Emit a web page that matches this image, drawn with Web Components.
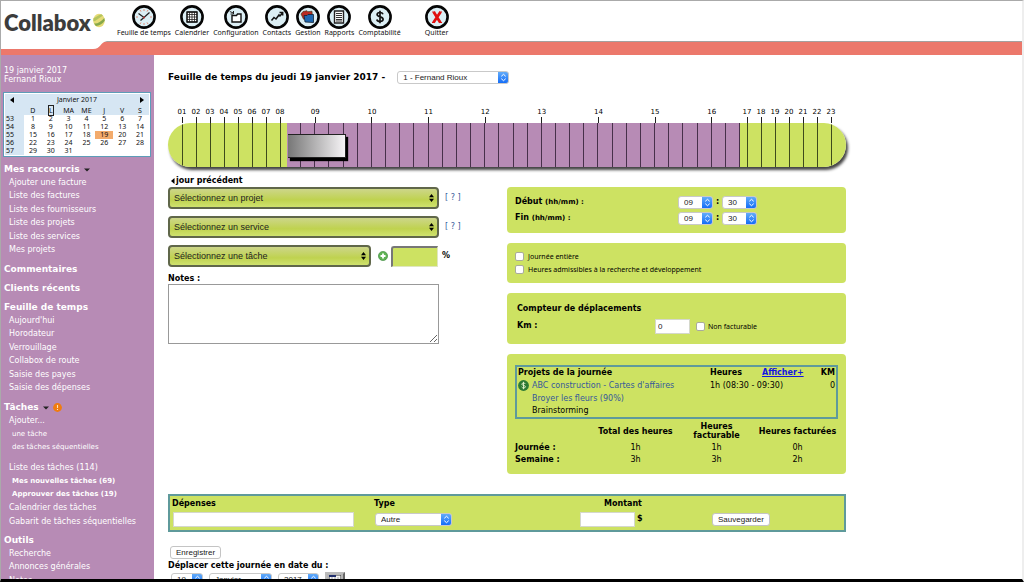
<!DOCTYPE html>
<html lang="fr">
<head>
<meta charset="utf-8">
<title>Collabox - Feuille de temps</title>
<style>
  html, body { height: 100%; margin: 0; }
  body { font: 8px/12px "DejaVu Sans", Verdana, sans-serif; color: #000; background: #fff; }
</style>
</head>
<body>
<collabox-app></collabox-app>

<script>
const LIME = '#cde262', MAUVE = '#b78bb5', TEAL = '#5f9a9b';

/* Rules shared by every shadow root that holds form controls or links. */
const shared = `
  * { box-sizing: border-box; }
  a { color: #35599a; text-decoration: none; }
  label { cursor: default; }
  input, select, textarea, button { margin: 0; color: #222; font: 8px/12px "Liberation Sans", Helvetica, sans-serif; }
  .mac {
    appearance: none; height: 13px; padding: 0 12px 0 5px; border: 1px solid #c9c9c9; border-radius: 3px;
    background: url("data:image/svg+xml,%3Csvg xmlns='http://www.w3.org/2000/svg' viewBox='0 0 11 13'%3E%3ClinearGradient id='g' x2='0' y2='1'%3E%3Cstop stop-color='%2369b1fa'/%3E%3Cstop offset='1' stop-color='%230d68f8'/%3E%3C/linearGradient%3E%3Cpath d='M0 0h8a3 3 0 0 1 3 3v7a3 3 0 0 1-3 3H0z' fill='url(%23g)'/%3E%3Cpath d='M3.3 5.3l2.2-2 2.2 2M3.3 7.7l2.2 2 2.2-2' fill='none' stroke='%23fff' stroke-width='1'/%3E%3C/svg%3E") right center / 11px 13px no-repeat border-box #fff;
  }
  .field { height: 15px; padding: 0 2px; border: 1px solid #d5d8cc; border-radius: 0; background: #fff; }
  .push { height: 13px; padding: 0 5px; border: 1px solid #c4c4c4; border-radius: 3px; background: #fff; line-height: 11px; }
  input[type=checkbox] { appearance: none; width: 9px; height: 9px; border: 1px solid #a9ab9c; border-radius: 2px; background: #fff; }
`;

function define(name, html, setup) {
  const template = document.createElement('template');
  template.innerHTML = html;
  customElements.define(name, class extends HTMLElement {
    constructor() {
      super();
      this.attachShadow({ mode: 'open' }).append(template.content.cloneNode(true));
    }
    connectedCallback() {
      if (setup && !this.ready) { this.ready = true; setup(this, this.shadowRoot); }
    }
  });
}

/* ---------- toolbar ---------- */
define('tool-link', `
  <style>
    :host { display: block; }
    a { display: flex; flex-direction: column; align-items: center; min-width: 24px; color: #111; text-decoration: none;
        font: 7px/8px "Noto Sans", sans-serif; white-space: nowrap; }
    .disc { display: grid; place-items: center; width: 24px; height: 24px; }
  </style>
  <a href="#">
    <svg class="disc" viewBox="0 0 24 24" aria-hidden="true">
      <circle cx="12" cy="12" r="10.6" fill="#dceff5" stroke="#050505" stroke-width="2.6"/>
      <g class="glyph"></g>
    </svg>
    <slot></slot>
  </a>`, (host, root) => {
  const glyphs = {
    clock: `<g stroke="#e08a76" stroke-width="1"><path d="M12 4v2M12 18v2M4 12h2M18 12h2M8 5l1 1.6M16 5l-1 1.6M8 19l1-1.6M16 19l-1-1.6"/></g><path d="M6.5 8.5L12 12.5L17.5 7.5M12 12.5L8.5 15.5" fill="none" stroke="#222" stroke-width="1.3"/><circle cx="12" cy="12.5" r="1.1" fill="#a33"/>`,
    grid: `<path d="M7 7h10v10H7zM9.5 7v10M12 7v10M14.500 7v10M7 9.500h10M7 12h10M7 14.500h10" fill="#fff" stroke="#222" stroke-width=".8"/><path d="M7 7h10v10H7z" fill="none" stroke="#111" stroke-width="1.3"/>`,
    box: `<path d="M8 10.500h4.500l1-1.500h3.500v8H8z" fill="#fff" stroke="#111" stroke-width="1.4"/><path d="M5.800 6.500l3.500 1.500M9.500 6v3H6.500" fill="none" stroke="#222" stroke-width="1"/>`,
    trend: `<path d="M6.500 15.500l2.500-3 2 1.500 3-4 1 1 2.500-3M14.500 7.500h3.200v3" fill="none" stroke="#111" stroke-width="1.500"/>`,
    folders: `<path d="M5 9l2-2.500 4-.8 1 1 4-.5.500 6-9 2z" fill="#b92b22" stroke="#331" stroke-width=".6"/><path d="M8 10.500h3l1-1h5.500v8L9 17z" fill="#1f67b0" stroke="#123" stroke-width=".8"/>`,
    sheet: `<path d="M7.500 6h9v12h-9z" fill="#fff" stroke="#222" stroke-width="1.400"/><path d="M9 8.500h6M9 10.500h6M9 12.500h6M9 14.500h6M9 16h6" stroke="#333" stroke-width="1"/>`,
    dollar: `<path d="M15 9.200c-.5-1.300-1.600-1.700-3-1.700-1.800 0-2.900.8-2.900 2.100 0 3 6 1.500 6 4.700 0 1.400-1.300 2.200-3.100 2.200-1.600 0-2.800-.6-3.200-2M12 5.700v12.600" fill="none" stroke="#111" stroke-width="1.700"/>`,
    cross: `<path d="M8.700 7l6.600 10.500M15.500 7l-7 10.500" stroke="#e01010" stroke-width="2.800"/><path d="M7.200 7h3M14 7h3M7 17.500h3M14 17.500h3" stroke="#e01010" stroke-width="1"/>`
  };
  root.querySelector('.glyph').innerHTML = glyphs[host.getAttribute('icon')];
});

define('app-header', `
  <style>
    :host { display: block; }
    .top { display: flex; height: 40px; }
    .brand { display: flex; flex: none; width: 116px; padding: 8px 0 0 3px; box-sizing: border-box; color: #3c3c3c;
             font: 800 22px/28px Lato, sans-serif; text-decoration: none; }
    .brand svg { margin: 4px 0 0 2px; }
    nav { display: flex; align-items: flex-start; gap: 4px; padding-top: 4px; }
    .quit { margin-left: 20px; }
    .band { height: 14px; box-sizing: border-box; border-top: 1px solid #a5a09e; background: #ec786b; }
    .band svg { display: block; margin-top: -1px; }
  </style>
  <div class="top">
    <a class="brand" href="#">Collabox<svg width="12" height="15" viewBox="0 0 12 15" aria-hidden="true">
      <ellipse cx="6" cy="7.500" rx="5.800" ry="6.800" fill="#e6dc78"/>
      <path d="M.3 5.500l6-3.500 2.200-.8 1.500 1.300-8 5.500-1.500.3z" fill="#b5c45e"/>
      <path d="M1 10.500c3.500.5 7-2 10.300-5.500l.5 2.800c-2.500 3.500-5.500 5-8.800 5.200z" fill="#86a84a"/></svg></a>
    <nav aria-label="Modules">
      <tool-link icon="clock">Feuille de temps</tool-link>
      <tool-link icon="grid">Calendrier</tool-link>
      <tool-link icon="box">Configuration</tool-link>
      <tool-link icon="trend">Contacts</tool-link>
      <tool-link icon="folders">Gestion</tool-link>
      <tool-link icon="sheet">Rapports</tool-link>
      <tool-link icon="dollar">Comptabilité</tool-link>
      <tool-link class="quit" icon="cross">Quitter</tool-link>
    </nav>
  </div>
  <div class="band"><svg width="106" height="8" viewBox="0 0 106 8" aria-hidden="true"><path d="M0 0h106c-7 1-6 8-14 8H0z" fill="#fff"/></svg></div>`);

/* ---------- sidebar ---------- */
define('mini-calendar', `
  <style>
    :host { display: block; border: 1px solid #5d9cb8; background: #fff; padding: 1px; }
    .cal { background: #fff; }
    .head { display: flex; justify-content: space-between; align-items: center; height: 12px; padding: 0 5px; background: #d6e6f3; }
    button { display: flex; padding: 0; border: 0; background: none; }
    table { width: 100%; border-collapse: collapse; table-layout: fixed; }
    .cal { font: 7px/8px "Noto Sans", sans-serif; color: #111; }
    th, td { padding: 0; height: 8px; text-align: center; font-weight: normal; }
    thead th { height: 9px; background: #d6e6f3; }
    th:first-child { width: 19px; background: #d6e6f3; text-align: left; padding-left: 1px; box-sizing: border-box; }
    .today { background: #f3ab6c; }
    .first { outline: 1px solid #222; }
  </style>
  <div class="cal">
    <div class="head">
      <button aria-label="Mois précédent"><svg width="4" height="6" viewBox="0 0 4 6"><path d="M4 0v6L0 3z"/></svg></button>
      <span>Janvier 2017</span>
      <button aria-label="Mois suivant"><svg width="4" height="6" viewBox="0 0 4 6"><path d="M0 0v6l4-3z"/></svg></button>
    </div>
    <table>
      <thead><tr><th></th><th>D</th><th><span class="first">L</span></th><th>MA</th><th>ME</th><th>J</th><th>V</th><th>S</th></tr></thead>
      <tbody></tbody>
    </table>
  </div>`, (host, root) => {
  let rows = '';
  for (let w = 0; w < 5; w++) {
    rows += `<tr><th>${53 + w}</th>`;
    for (let d = 1; d <= 7; d++) {
      const n = w * 7 + d;
      rows += `<td${n === 19 ? ' class="today"' : ''}>${n <= 31 ? n : ''}</td>`;
    }
    rows += '</tr>';
  }
  root.querySelector('tbody').innerHTML = rows;
});

define('nav-group', `
  <style>
    :host { display: block; }
    h2 { display: flex; align-items: center; gap: 4px; margin: 0; font: bold 9px/13px "DejaVu Sans", sans-serif; color: #fff; }
    ::slotted(ul) { margin: 0; padding: 0; list-style: none; }
    .mark { display: none; }
    :host([menu]) .arrow, :host([alert]) .alert { display: block; }
  </style>
  <h2><slot name="title"></slot>
    <svg class="mark arrow" width="6" height="4" viewBox="0 0 6 4" aria-hidden="true"><path d="M0 .500h6L3 3.500z" fill="#222"/></svg>
    <svg class="mark alert" width="9" height="9" viewBox="0 0 9 9" role="img" aria-label="Alerte"><circle cx="4.500" cy="4.500" r="4.400" fill="#f07c10"/><path d="M4.500 2v3M4.500 6v1" stroke="#ffe3bd" stroke-width="1.100"/></svg>
  </h2>
  <slot></slot>`);

define('side-nav', `
  <style>
    :host { display: flex; flex-direction: column; gap: 6px; padding: 11px 3px 0 2px; box-sizing: border-box; background: ${MAUVE}; color: #fff; overflow: hidden; }
    .user { margin: 0 1px; font: 8px/9px "DejaVu Sans", sans-serif; }
    .user p { margin: 0; }
    mini-calendar { margin-top: 2px; }
    ul { margin: 0; padding: 0; list-style: none; }
    nav { display: flex; flex-direction: column; gap: 6px; padding-left: 1px; white-space: nowrap; }
    li { padding-left: 5px; line-height: 13px; }
    li:nth-child(even) { line-height: 14px; }
    a { color: #fff; text-decoration: none; }
    .sub { padding-left: 8px; font-size: 7px; }
    .strong { font-weight: bold; }
    ul + ul { padding-top: 7px; }
  </style>
  <div class="user"><p>19 janvier 2017</p><p>Fernand Rioux</p></div>
  <mini-calendar></mini-calendar>
  <nav aria-label="Menu">
    <nav-group menu><span slot="title">Mes raccourcis</span>
      <ul><li><a href="#">Ajouter une facture</a></li><li><a href="#">Liste des factures</a></li><li><a href="#">Liste des fournisseurs</a></li><li><a href="#">Liste des projets</a></li><li><a href="#">Liste des services</a></li><li><a href="#">Mes projets</a></li></ul></nav-group>
    <nav-group><span slot="title">Commentaires</span></nav-group>
    <nav-group><span slot="title">Clients récents</span></nav-group>
    <nav-group><span slot="title">Feuille de temps</span>
      <ul><li><a href="#">Aujourd'hui</a></li><li><a href="#">Horodateur</a></li><li><a href="#">Verrouillage</a></li><li><a href="#">Collabox de route</a></li><li><a href="#">Saisie des payes</a></li><li><a href="#">Saisie des dépenses</a></li></ul></nav-group>
    <nav-group menu alert><span slot="title">Tâches</span>
      <ul><li><a href="#">Ajouter...</a></li><li class="sub"><a href="#">une tâche</a></li><li class="sub"><a href="#">des tâches séquentielles</a></li></ul>
      <ul><li><a href="#">Liste des tâches (114)</a></li><li class="sub strong"><a href="#">Mes nouvelles tâches (69)</a></li><li class="sub strong"><a href="#">Approuver des tâches (19)</a></li><li><a href="#">Calendrier des tâches</a></li><li><a href="#">Gabarit de tâches séquentielles</a></li></ul></nav-group>
    <nav-group><span slot="title">Outils</span>
      <ul><li><a href="#">Recherche</a></li><li><a href="#">Annonces générales</a></li><li><a href="#">Notes</a></li></ul></nav-group>
  </nav>`);

/* ---------- day timeline ---------- */
define('day-timeline', `
  <style>
    :host { display: block; }
    .hours, .bar { display: grid; grid-template-columns: 7px repeat(8, 14px) repeat(8, 1fr) repeat(7, 14px) 8px; }
    .hour { display: flex; flex-direction: column; align-items: center; font: 7px/10px "DejaVu Sans", sans-serif; }
    .hour::after { content: ""; width: 1px; height: 6px; background: #222; }
    .bar { position: relative; height: 44px; border-radius: 22px; overflow: hidden; background: ${LIME}; }
    .shade { border-radius: 22px; box-shadow: 2px 3px 3px #444; }
    .cell { display: flex; justify-content: center; }
    .cell::after { content: ""; width: 1px; background: #3f4a1c; }
    .work { display: grid; grid-template-columns: repeat(4, 1fr); background: ${MAUVE}; }
    .work i { border-right: 1px solid #47304a; }
    .event { position: absolute; top: 11px; left: 120px; width: 58px; height: 24px; box-sizing: border-box; border: 1px solid #222; border-left: 0;
             background: linear-gradient(90deg, #777, #f6f4f6); box-shadow: 2px 3px 1px #000; }
  </style>
  <div class="hours"></div>
  <div class="shade"><div class="bar"></div></div>`, (host, root) => {
  let hours = '<span></span>', bar = '<span></span>';
  for (let h = 1; h <= 23; h++) {
    hours += `<span class="hour">${String(h).padStart(2, '0')}</span>`;
    bar += h > 8 && h < 17 ? '<span class="work"><i></i><i></i><i></i><i></i></span>' : '<span class="cell"></span>';
  }
  root.querySelector('.hours').innerHTML = hours;
  root.querySelector('.bar').innerHTML = bar + '<span></span><span class="event" title="08:30 - 09:30"></span>';
});

/* ---------- entry form, left ---------- */
define('entry-form', `
  <style>${shared}
    :host { display: block; font: bold 8px/12px "DejaVu Sans", sans-serif; }
    .prev { display: flex; align-items: center; gap: 1px; margin-left: 3px; color: #000; }
    .row { display: flex; align-items: center; height: 22px; margin-bottom: 7px; }
    .row.last { margin-bottom: 6px; }
    .big { appearance: none; width: 271px; height: 22px; padding: 0 12px 0 4px; border: 2px solid #60674a; border-radius: 4px; color: #222; font-size: 9px;
      background: url("data:image/svg+xml,%3Csvg xmlns='http://www.w3.org/2000/svg' viewBox='0 0 5 8'%3E%3Cpath d='M0 3.300L2.500 0 5 3.300zM0 4.700L2.500 8 5 4.700z'/%3E%3C/svg%3E") right 3px center / 5px 8px no-repeat, linear-gradient(#cdd68a, #bfd24f 60%, #cfe26e); }
    .task { width: 203px; }
    .help { margin-left: 6px; font-weight: normal; }
    .add { display: flex; margin: 0 3px 0 7px; padding: 0; border: 0; background: none; }
    .pct { width: 47px; height: 21px; margin-right: 4px; border: 1px solid #dfe6c0; border-top: 2px solid #777; border-left: 2px solid #777; border-radius: 3px 0 0 0; background: ${LIME}; padding: 0 2px; }
    .notes { display: block; line-height: 11px; }
    textarea { display: block; width: 271px; height: 60px; border: 1px solid #999; resize: both; }
  </style>
  <a class="prev" href="#"><svg width="4" height="6" viewBox="0 0 4 6" aria-hidden="true"><path d="M3.500 0v6L0 3z"/></svg>jour précédent</a>
  <div class="row"><select class="big" aria-label="Projet"><option>Sélectionnez un projet</option></select><a class="help" href="#">[ ? ]</a></div>
  <div class="row"><select class="big" aria-label="Service"><option>Sélectionnez un service</option></select><a class="help" href="#">[ ? ]</a></div>
  <div class="row last"><select class="big task" aria-label="Tâche"><option>Sélectionnez une tâche</option></select>
    <button class="add" aria-label="Ajouter une tâche"><svg width="10" height="10" viewBox="0 0 10 10"><circle cx="5" cy="5" r="4.600" fill="#5fb254" stroke="#3d8a3c" stroke-width=".6"/><path d="M5 2.500v5M2.500 5h5" stroke="#fff" stroke-width="1.800"/></svg></button>
    <input class="pct" id="pct"><label for="pct">%</label></div>
  <label class="notes" for="notes">Notes :</label>
  <textarea id="notes"></textarea>`);

/* ---------- panels, right ---------- */
define('lime-panel', `
  <style>
    :host { display: block; padding: 7px 8px; box-sizing: border-box; border-radius: 4px; background: ${LIME}; }
  </style>
  <slot></slot>`);

define('day-panels', `
  <style>${shared}
    :host { display: flex; flex-direction: column; gap: 10px; font: 8px/12px "DejaVu Sans", sans-serif; }
    .time { display: grid; grid-template-columns: 163px 35px 9px 35px; align-items: center; height: 16px; font-weight: bold; text-align: center; }
    .time label { text-align: left; }
    .time small { font-size: 7px; }
    .hm { width: 35px; }
    .small { font: 7px/13px "Noto Sans", sans-serif; }
    .check { display: flex; align-items: center; gap: 4px; height: 13px; }
    .km { display: flex; align-items: center; height: 16px; padding-left: 2px; margin-bottom: 3px; }
    .km > label:first-child { width: 138px; font-weight: bold; }
    .km .field { width: 35px; height: 15px; margin-right: 6px; }
    .km .check { gap: 3px; }
    h3 { margin: 3px 0 3px 2px; font: bold 8px/12px "DejaVu Sans", sans-serif; }
    table { width: 100%; border-collapse: collapse; }
    th, td { padding: 0; text-align: left; }
    .projects { border: 2px solid ${TEAL}; margin-top: 4px; table-layout: fixed; }
    .projects tr { height: 13px; }
    .projects th:first-child, .projects td:first-child { padding-left: 1px; }
    .projects .num { text-align: right; padding-right: 1px; }
    .projects a.more { color: #1414e0; text-decoration: underline; }
    .item { display: flex; align-items: center; gap: 3px; }
    .indent { display: block; padding-left: 14px; }
    .totals { table-layout: fixed; margin: 2px 0; line-height: 9px; }
    .totals th, .totals td { text-align: center; height: 12px; }
    .totals .heads th { height: 20px; }
    .totals th:first-child { text-align: left; }
  </style>
  <lime-panel>
    <div class="time"><label for="h1">Début <small>(hh/mm) :</small></label><select id="h1" class="mac hm"><option>09</option></select><span>:</span><select class="mac hm" aria-label="Début, minutes"><option>30</option></select></div>
    <div class="time"><label for="h2">Fin <small>(hh/mm) :</small></label><select id="h2" class="mac hm"><option>09</option></select><span>:</span><select class="mac hm" aria-label="Fin, minutes"><option>30</option></select></div>
  </lime-panel>
  <lime-panel>
    <div class="check small"><input type="checkbox" id="full"><label for="full">Journée entière</label></div>
    <div class="check small"><input type="checkbox" id="rd"><label for="rd">Heures admissibles à la recherche et développement</label></div>
  </lime-panel>
  <lime-panel>
    <h3>Compteur de déplacements</h3>
    <div class="km"><label for="km">Km :</label><input class="field" id="km" value="0"><div class="check small"><input type="checkbox" id="nf"><label for="nf">Non facturable</label></div></div>
  </lime-panel>
  <lime-panel>
    <table class="projects">
      <colgroup><col style="width:194px"><col style="width:52px"><col style="width:52px"><col></colgroup>
      <tr><th>Projets de la journée</th><th>Heures</th><th><a class="more" href="#">Afficher+</a></th><th class="num">KM</th></tr>
      <tr><td><span class="item"><svg width="11" height="11" viewBox="0 0 11 11" aria-hidden="true"><circle cx="5.500" cy="5.500" r="5.400" fill="#2c7a34"/><path d="M7.400 4c-.5-1.400-3.600-1.300-3.600.2 0 1.600 3.700.9 3.700 2.600 0 1.500-3.300 1.600-3.900.1M5.500 1.800v7.400" fill="none" stroke="#e8f5d0" stroke-width=".9"/></svg><a href="#">ABC construction - Cartes d'affaires</a></span></td><td colspan="2">1h (08:30 - 09:30)</td><td class="num">0</td></tr>
      <tr><td colspan="4"><span class="indent"><a href="#">Broyer les fleurs (90%)</a></span></td></tr>
      <tr><td colspan="4"><span class="indent">Brainstorming</span></td></tr>
    </table>
    <table class="totals">
      <colgroup><col><col style="width:81px"><col style="width:81px"><col style="width:81px"></colgroup>
      <tr class="heads"><th></th><th>Total des heures</th><th>Heures facturable</th><th>Heures facturées</th></tr>
      <tr><th>Journée :</th><td>1h</td><td>1h</td><td>0h</td></tr>
      <tr><th>Semaine :</th><td>3h</td><td>3h</td><td>2h</td></tr>
    </table>
  </lime-panel>`);

/* ---------- expenses ---------- */
define('expense-bar', `
  <style>${shared}
    :host { display: grid; grid-template-columns: 202px 205px 1fr 131px; box-sizing: border-box; height: 38px; padding: 2px 2px 0; border: 2px solid ${TEAL};
            background: ${LIME}; font: bold 8px/12px "DejaVu Sans", sans-serif; }
    .cell { display: flex; flex-direction: column; }
    .line { display: flex; align-items: center; gap: 2px; height: 18px; padding-left: 1px; }
    .name { width: 181px; }
    .kind { width: 77px; }
    .amount { width: 55px; }
    .cell.sum label { margin-left: 25px; }
  </style>
  <div class="cell"><label for="dep">Dépenses</label><div class="line"><input class="field name" id="dep"></div></div>
  <div class="cell"><label for="kind">Type</label><div class="line"><select class="mac kind" id="kind"><option>Autre</option></select></div></div>
  <div class="cell sum"><label for="sum">Montant</label><div class="line"><input class="field amount" id="sum">$</div></div>
  <div class="cell"><span>&nbsp;</span><div class="line"><button class="push">Sauvegarder</button></div></div>`);

/* ---------- page ---------- */
define('time-sheet', `
  <style>${shared}
    :host { display: block; padding: 14px; box-sizing: border-box; overflow: hidden; }
    .sheet { max-width: 678px; }
    .title { display: flex; align-items: center; gap: 12px; height: 16px; }
    h1 { margin: 0; font: bold 9px/16px "DejaVu Sans", sans-serif; white-space: nowrap; }
    .person { width: 112px; }
    day-timeline { margin-top: 22px; }
    .columns { display: grid; grid-template-columns: minmax(0, 1fr) minmax(0, 1fr); margin: 8px 0 20px; }
    day-panels { margin-top: 12px; }
    .save { margin: 14px 0 0 2px; }
    .move { display: block; font: bold 8px/14px "DejaVu Sans", sans-serif; }
    .dates { display: flex; align-items: flex-start; gap: 6px; margin-left: 3px; }
    .date-button { width: 20px; height: 15px; margin-top: -1px; padding: 1px 2px; border: 2px outset #bbb; background: #b5b5b5; }
    .date-button svg { display: block; }
  </style>
  <div class="sheet">
    <div class="title"><h1>Feuille de temps du jeudi 19 janvier 2017 -</h1><select class="mac person" aria-label="Employé"><option>1 - Fernand Rioux</option></select></div>
    <day-timeline></day-timeline>
    <div class="columns"><entry-form></entry-form><day-panels></day-panels></div>
    <expense-bar></expense-bar>
    <button class="push save">Enregistrer</button>
    <label class="move" for="day">Déplacer cette journée en date du :</label>
    <div class="dates">
      <select class="mac" id="day" style="width:32px"><option>19</option></select>
      <select class="mac" aria-label="Mois" style="width:63px"><option>Janvier</option></select>
      <select class="mac" aria-label="Année" style="width:41px"><option>2017</option></select>
      <button class="date-button" aria-label="Choisir une date"><svg width="12" height="9" viewBox="0 0 12 9"><path d="M0 0h12v9H0z" fill="#f4f4f4" stroke="#333"/><path d="M0 0h7v2H0z" fill="#22306e"/><path d="M3 2v7M6 2v7M9 2v7M0 5h12" stroke="#777" stroke-width=".6"/><path d="M8 4h3v3H8z" fill="#b44"/></svg></button>
    </div>
  </div>`);

define('collabox-app', `
  <style>
    :host { display: grid; grid-template: auto minmax(0, 1fr) / 153px minmax(0, 1fr); height: 100vh; box-sizing: border-box; overflow: hidden;
            border: solid #aaa; border-width: 1px 2px 3px 1px; border-right-color: #eee; border-bottom-color: #000; }
    app-header { grid-column: 1 / -1; }
  </style>
  <app-header></app-header>
  <side-nav></side-nav>
  <time-sheet></time-sheet>`);
</script>
</body>
</html>
